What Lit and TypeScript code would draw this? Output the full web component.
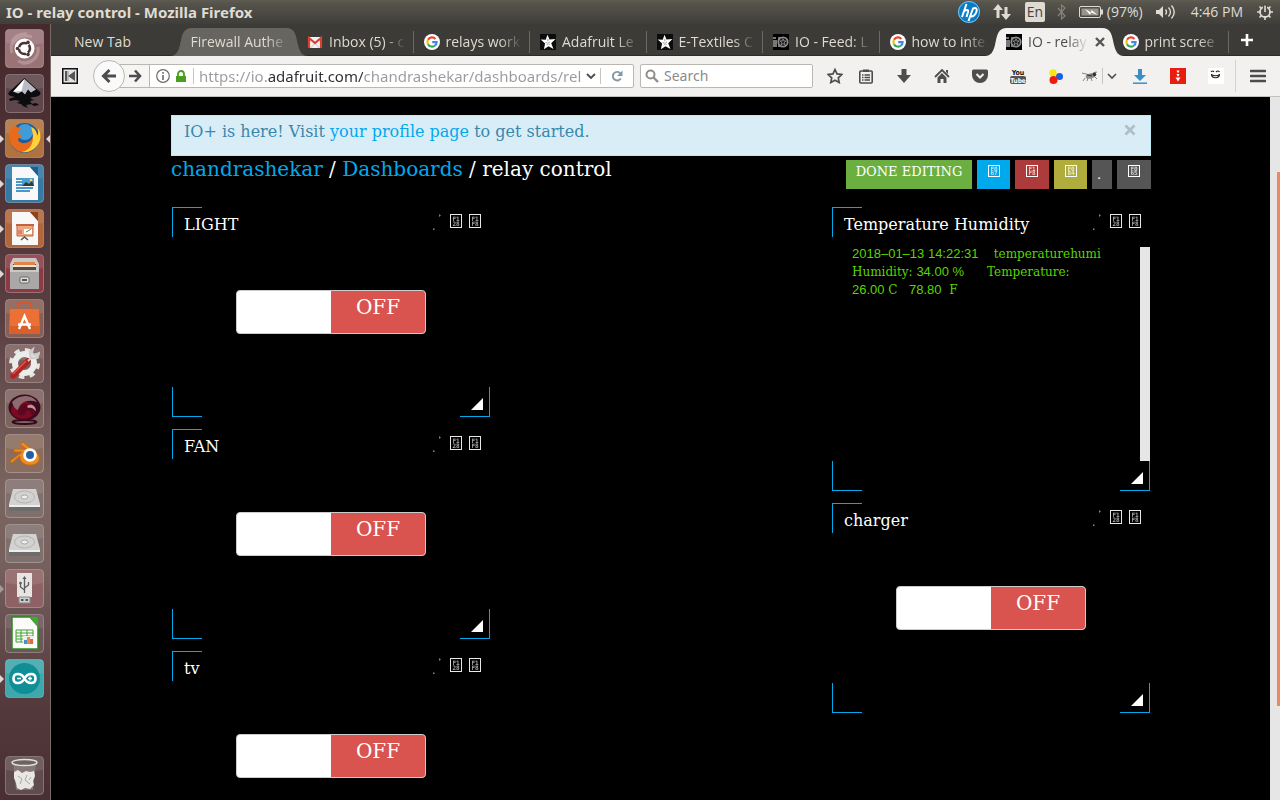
import { LitElement, html, css, svg, nothing, TemplateResult } from "lit";
import { customElement, property } from "lit/decorators.js";
import { classMap } from "lit/directives/class-map.js";

/* ---------- shared glyphs ---------- */

const google = svg`
  <circle cx="8" cy="8" r="8" fill="#fff"/>
  <g fill="none" stroke-width="2.2">
    <path d="M11.4 4.9A4.6 4.6 0 0 0 4 5.8" stroke="#ea4335"/>
    <path d="M4 5.8a4.6 4.6 0 0 0 0 4.4" stroke="#fbbc05"/>
    <path d="M4 10.2a4.6 4.6 0 0 0 7 1.3" stroke="#34a853"/>
    <path d="M11 11.5a4.6 4.6 0 0 0 1.6-3.3H8.2" stroke="#4285f4"/>
  </g>`;
const gmail = svg`
  <path d="M1 3h14v11H1z" fill="#f2f2f2"/>
  <path d="M2 14V4L8 9l6-5v10" fill="none" stroke="#d93f32" stroke-width="2.2"/>
  <path d="M4 14l3-4M12 14L9 10" stroke="#ccc" fill="none"/>`;
const star = svg`
  <path d="M0 0h16v16H0z" fill="#0c0c0c"/>
  <path d="M7.5.8l2 4.6 6-.4-4.3 4.3 2.3 5.6-5-2.6-4.6 3 1.2-5.8L.7 5.6l5 .1z" fill="#fff"/>
  <path d="M7.8 5v2.3M5.6 8.500l1.800.3M10 8l-1.700.8M7 11.200l.6-1.500M9.500 11l-1-1.500" stroke="#777" stroke-width=".7"/>`;
const io = svg`
  <path d="M0 0h16v16H0z" fill="#000"/>
  <path d="M0 3h3v2H0zM0 6h4v7H0z" fill="#777"/>
  <path d="M5 3h4v10H5z" fill="#777"/>
  <circle cx="10" cy="8" r="4.700" fill="#111" stroke="#8c8c8c" stroke-width="1.800"/>
  <path d="M10 4.800l.9 2.100 2.200.1-1.700 1.500.6 2.300-2-1.200-2 1.200.6-2.300L7 7l2.200-.1z" fill="#222" stroke="#aaa" stroke-width=".7"/>`;

const favicons: Record<string, TemplateResult> = { google, gmail, star, io } as any;

const icon = (body: unknown, w = 16, h = 16, box = `0 0 ${w} ${h}`) =>
  html`<svg width=${w} height=${h} viewBox=${box} aria-hidden="true">${body}</svg>`;

/* Placeholder box that shows the code point of a missing symbol */
const hexbox = (code: string, ink: string, h = 14) => html`
  <svg width="12" height=${h} viewBox="0 0 12 ${h}" role="img" aria-label=${code}>
    <rect x=".5" y=".5" width="11" height=${h - 1} fill="none" stroke=${ink}/>
    <g fill=${ink} opacity=".7" font-size="6" font-weight="700" font-family="DejaVu Sans Mono, monospace" text-anchor="middle">
      <text x="6" y=${h / 2 - 0.5}>${code.slice(0, 2)}</text><text x="6" y=${h - 2}>${code.slice(2)}</text>
    </g>
  </svg>`;

/* ---------- launcher ---------- */

const disk = svg`
  <path d="M8 10h23l4 15v6H4v-6z" fill="#d2d2d0"/><path d="M4 26h31v6H4z" fill="#6d6c6a"/>
  <path d="M4 26h31v2H4z" fill="#eee"/>
  <ellipse cx="19.5" cy="18" rx="10" ry="6" fill="none" stroke="#b2b2b0"/>
  <ellipse cx="19.5" cy="18" rx="3.5" ry="2" fill="#efefed" stroke="#a8a8a6"/>`;

interface Tile { name: string; bg: string; mark?: string; body: unknown }

const tiles: Tile[] = [
  { name: "Search your computer", bg: "#9a7377", body: svg`
    <path d="M7 24C3 12 16 4 27 8M13 32c10 5 22-2 20-14M7 13c2-6 9-9 15-8M32 26c-3 6-9 9-15 8" fill="none" stroke="#c9b0b2" stroke-width="3" opacity=".5"/>
    <circle cx="19.500" cy="19.500" r="10" fill="#fff"/>
    <circle cx="19.500" cy="19.500" r="5.500" fill="none" stroke="#4b3437" stroke-width="2.600" stroke-dasharray="9.5 2" stroke-dashoffset="4.700"/>
    <g fill="#4b3437"><circle cx="12.500" cy="19.500" r="1.800"/><circle cx="23" cy="13.400" r="1.800"/><circle cx="23" cy="25.600" r="1.800"/></g>` },
  { name: "Inkscape", bg: "#5e464a", body: svg`
    <path d="M19.500 4L35 18c2 3-3 5-7 5l-3 1 4 2-4 1 2 3-6 1 2 3-5-2-2-2-4-1 3-2-5-1-5 1-1-2 6-2C5 22 2 21 4 18z" fill="#0c0c0e"/>
    <path d="M19.500 5L31 15.500l-5 3-3-3-3 5-3-3-4 2-5-2z" fill="#b9bcc4"/><path d="M19.500 5l-3 12-8 .5z" fill="#fff"/>
    <path d="M26 30l5-1 3 2-5 1z" fill="#0c0c0e"/>` },
  { name: "Firefox", bg: "#b0733f", mark: "both", body: svg`
    <circle cx="19.500" cy="19" r="15" fill="#1d5c9e"/><circle cx="20" cy="13" r="8" fill="#3f9cd8"/>
    <path d="M5 11c2-2 3-4 6-6 0 3 1 4 5 4-1 2-3 3-4 5 3 1 5 2 5 4-2 1-4 1-4 3 2 4 8 4 12 1 4-3 4-9 1-14 5 2 6 6 6 9 2-3 1-6 1-8 4 6 3 14-2 19-5 6-15 7-21 2C4 25 3 18 5 11z" fill="#ea6a1b"/>
    <path d="M26 8c5 2 6 6 6 9 2-3 1-6 1-8 4 6 3 14-2 19-4 4-9 6-14 5 9-2 14-11 9-25z" fill="#ffd23c"/>` },
  { name: "LibreOffice Writer", bg: "#3579a6", mark: "left", body: svg`
    <path d="M7 3h18l8 9v24H7z" fill="#f8f8f8"/><path d="M25 3h8v9z" fill="#1f5f8f"/>
    <path d="M11 15h6M11 18h6M11 21h6M11 24h17M11 27h14" stroke="#4c96c8" stroke-width="2"/>
    <path d="M17 14h12v8H17z" fill="#4aa0d4"/><path d="M17 22l4-4 3 2 3-3 2 5z" fill="#333c30"/><circle cx="26" cy="16" r="1.300" fill="#fbd64a"/>` },
  { name: "LibreOffice Impress", bg: "#b1673b", mark: "left", body: svg`
    <path d="M7 3h18l8 9v24H7z" fill="#f8f8f8"/><path d="M25 3h8v9z" fill="#8a4520"/>
    <path d="M12 16h16v11H12z" fill="#eda987" stroke="#c3653a"/><path d="M11 16h18" stroke="#c3653a" stroke-width="2"/>
    <path d="M19 20h8v5h-8z" fill="#fff"/><path d="M21 23l2-1 3-2" stroke="#4a9a3a" fill="none"/><path d="M13 22h4M13 24h4" stroke="#c3653a"/>
    <path d="M16 31l3.500-3 3.500 3" stroke="#555" fill="none" stroke-width="1.500"/>` },
  { name: "Files", bg: "#8c3b46", mark: "left", body: svg`
    <path d="M8 4h23l3 6v25H5V10z" fill="#c9c8c6"/><path d="M8 10h23v6H8z" fill="#5a4a40"/>
    <path d="M9 8h21v3H9z" fill="#e0834a"/><path d="M8 11h23v2H8z" fill="#f2e6d0"/>
    <path d="M5 18h29v17H5z" fill="#a9a8a6"/><rect x="15" y="23" width="9" height="6" rx="1" fill="#ddd" stroke="#6a6a68"/><path d="M17 26h5" stroke="#555" stroke-width="2"/>` },
  { name: "Ubuntu Software", bg: "#866055", body: svg`
    <path d="M13 12V6c0-3 13-3 13 0v6" fill="none" stroke="#d15a2c" stroke-width="2.500"/>
    <path d="M5 10h29l1 25H4z" fill="#ec6f36"/><path d="M4 27h31v8H4z" fill="#d9602a"/>
    <path d="M14 30l5.500-13L25 30M13 25.500h13" fill="none" stroke="#fff" stroke-width="2.400"/>` },
  { name: "System Settings", bg: "#7c5f5d", body: svg`
    <circle cx="19.500" cy="19.500" r="13.500" fill="none" stroke="#e4e4e2" stroke-width="4" stroke-dasharray="5.300 5.300"/>
    <circle cx="19.500" cy="19.500" r="9.500" fill="none" stroke="#ececea" stroke-width="6"/>
    <path d="M8 32L23 17" stroke="#b52222" stroke-width="5.500" stroke-linecap="round"/><path d="M8 30L21 17" stroke="#e05848" stroke-width="1.500"/>
    <path d="M23 17l4-4M28 5c-4 3-4 7-1 9 4 1 7-2 7-5l-4 2-3-2z" fill="#ddd" stroke="#ccc" stroke-width="2"/>` },
  { name: "Chat", bg: "#7d635f", body: svg`
    <ellipse cx="19.500" cy="33" rx="12" ry="2" fill="none" stroke="#37071c" stroke-width="2"/>
    <ellipse cx="19.500" cy="18.500" rx="16" ry="13" fill="#3e0a20"/><ellipse cx="18" cy="21" rx="12" ry="9" fill="#7c0822"/>
    <path d="M7 13c7-8 20-8 25 0-8-3-17-1-19 8-3-1-5-4-6-8z" fill="#8d6c70"/>
    <path d="M13 25c0-8 6-12 12-9 5 3 5 8 2 11-1-5-3-6-6-5 0 3-4 6-8 3z" fill="#5a0820"/>
    <path d="M22 17c4-3 9 0 9 5-3-3-5-4-8-3z" fill="#b59a9a"/>` },
  { name: "Blender", bg: "#8a6d5e", body: svg`
    <path d="M5 27l12-9H9v-3h12l-6-5 3-2 11 9c8 4 7 13-2 14-8 1-13-4-12-9L7 29z" fill="#ee8a22" stroke="#c66a0c"/>
    <circle cx="25" cy="21" r="6.800" fill="#fff"/><circle cx="25" cy="21" r="4" fill="#265f9f"/>` },
  { name: "Volume 1", bg: "#80706d", body: disk },
  { name: "Volume 2", bg: "#80706d", body: disk },
  { name: "USB drive", bg: "#8e6265", mark: "hollow", body: svg`
    <path d="M12 4h15v24H12z" fill="#e6e5e3"/><path d="M14 28h11v6H14z" fill="#cfcecc" stroke="#8a8886"/>
    <path d="M16 31h2.500M20.500 31h2.500" stroke="#555" stroke-width="2"/>
    <path d="M19.500 24V9M19.500 21l-4-3v-4M19.500 19l4-3v-3" fill="none" stroke="#5c5c5a" stroke-width="1.300"/>
    <path d="M17.500 10l2-3 2 3z" fill="#5c5c5a"/><circle cx="15.500" cy="14" r="1.300" fill="#5c5c5a"/>` },
  { name: "LibreOffice Calc", bg: "#6b5658", body: svg`
    <path d="M7 3h18l8 9v23H7z" fill="#fbfbfb" stroke="#2c8a1e" stroke-width="1.500"/><path d="M24 3h9v10z" fill="#43a832"/>
    <path d="M11 16h17v12H11z" fill="#fff" stroke="#3fa02f"/><path d="M11 19h17M11 22h17M11 25h17M16 16v12M22 16v12" stroke="#3fa02f"/>
    <path d="M18 22h11v8H18z" fill="#eee"/><path d="M19 30v-4h3v4z" fill="#4a90c8"/><path d="M22 30v-7h3v7z" fill="#e88c3a"/><path d="M25 30v-5h3v5z" fill="#d96a4a"/>` },
  { name: "Arduino IDE", bg: "#3fa8ad", mark: "left", body: svg`
    <circle cx="19.500" cy="19.500" r="15.500" fill="#0f8f95"/>
    <path d="M19.500 19.500c-3-6-11-6-11 0s8 6 11 0 11-6 11 0-8 6-11 0z" fill="none" stroke="#fff" stroke-width="2.600"/>
    <path d="M12 19.500h4M23 19.500h4M25 17.500v4" stroke="#fff" stroke-width="1.400"/>` },
];

const trash: Tile = { name: "Trash", bg: "#604c4e", body: svg`
  <path d="M8 6h23l-3 28H11z" fill="#8d8583" opacity=".7"/>
  <ellipse cx="19.500" cy="6.500" rx="12.500" ry="3" fill="#6c6462" stroke="#e2e0de" stroke-width="1.500"/>
  <path d="M9 16l4-2 4 3 4-2 4 1 4-1 1 5-2 5 1 4-4 4-5-1-4 2-4-2-1-5-2-5z" fill="#e8e7e3"/>
  <path d="M13 20l4 3-2 5M22 19l-2 5 5 4M26 21l-2 3" stroke="#aaa8a4" fill="none"/>` };

@customElement("app-launcher")
class AppLauncher extends LitElement {
  static styles = css`
    :host { display: flex; flex-direction: column; justify-content: space-between; box-sizing: border-box;
      padding: 5px 6px 5px 5px; border-right: 1px solid #796967;
      background: linear-gradient(#46292d, #4e3337 20%, #5a3f42 38%, #7a6560 60%, #75605d 70%, #53393c 88%, #492f33); }
    nav { display: flex; flex-direction: column; gap: 6px; }
    .tile { position: relative; display: block; width: 39px; height: 39px; padding: 0; border: 0; border-radius: 4px; background: transparent; }
    .tile > svg { display: block; }
    .mark { position: absolute; top: 16px; left: -5px; border: solid transparent; border-width: 4px 0 4px 4px; border-left-color: #ddd8d6; }
    .hollow { border-left-color: #a79b9a; }
    .right { left: auto; right: -6px; border-width: 4px 4px 4px 0; border-right-color: #ddd8d6; }
  `;
  private tile(t: Tile) {
    return html`<button class="tile" aria-label=${t.name}>
      <svg width="39" height="39" viewBox="0 0 39 39" aria-hidden="true">
        <rect x=".5" y=".5" width="38" height="38" rx="3.500" fill=${t.bg} stroke="#fff" stroke-opacity=".28"/>
        <path d="M1 4a3 3 0 0 1 3-3h31a3 3 0 0 1 3 3v10Q19 18 1 14z" fill="#fff" opacity=".1"/>
        ${t.body}
      </svg>
      ${t.mark ? html`<span class="mark ${t.mark === "hollow" ? "hollow" : ""}"></span>` : nothing}
      ${t.mark === "both" ? html`<span class="mark right"></span>` : nothing}
    </button>`;
  }
  render() {
    return html`<nav aria-label="Applications">${tiles.map((t) => this.tile(t))}</nav>${this.tile(trash)}`;
  }
}

/* ---------- desktop panel ---------- */

@customElement("top-panel")
class TopPanel extends LitElement {
  static styles = css`
    :host { display: flex; align-items: center; justify-content: space-between; height: 24px; padding: 0 7px 0 6px;
      background: linear-gradient(#5f5d52, #55534b 15%, #3f3e3a); color: #dfdbd2;
      font: 14px/24px "Open Sans", "Noto Sans", sans-serif; white-space: nowrap; }
    .title { font: 700 15px/24px "Noto Sans", "Open Sans", sans-serif; }
    .tray { display: flex; align-items: center; }
    .tray svg { display: block; }
    .hp { margin-right: 13px; }
    .net { margin-right: 14px; }
    .lang { height: 20px; width: 20px; line-height: 20px; border-radius: 2px; background: #dfdbd2; color: #45443e; text-align: center; margin-right: 12px; }
    .bt { margin-right: 13px; }
    .bat { margin-right: 4px; }
    .pct { margin-right: 13px; }
    .vol { margin-right: 15px; }
    .clock { margin-right: 14px; }
  `;
  render() {
    return html`
      <span class="title">IO - relay control - Mozilla Firefox</span>
      <div class="tray">
        <span class="hp">${icon(svg`<circle cx="11" cy="11" r="11" fill="#0b7cc4"/><circle cx="11" cy="11" r="10.500" fill="none" stroke="#7cc4ee"/>
          <g fill="none" stroke="#fff" stroke-width="2"><path d="M8.500 3L4 16M6 10.500c2-2 5-2 4 .5L8.500 16M10.500 20L15 7.500c3-1 4.500 0 3.500 3s-2.500 5.500-6 5"/></g>`, 22, 22)}</span>
        <span class="net">${icon(svg`<path d="M5 1l5 6H6.500v8h-3V7H0z" fill="#dfdbd2"/><path d="M13 17l-5-6h3.500V4h3v7H18z" fill="#dfdbd2"/>`, 18, 18)}</span>
        <span class="lang">En</span>
        <span class="bt">${icon(svg`<path d="M1 4l7 8-3.500 3V1L8 4l-7 8" fill="none" stroke="#85837b" stroke-width="1.200"/>`, 9, 16)}</span>
        <span class="bat">${icon(svg`<rect x=".5" y=".5" width="21" height="11" rx="1.500" fill="none" stroke="#dfdbd2"/><path d="M2.500 2.500h17v7h-17z" fill="#97948b"/><path d="M22 3.500h2v5h-2z" fill="#dfdbd2"/><path d="M6 3l6 3.500.5-2.500 6 5-6.500-2.500L11 9z" fill="#fff"/>`, 24, 12)}</span>
        <span class="pct">(97%)</span>
        <span class="vol">${icon(svg`<path d="M0 5h3l4-4v12L3 9H0z" fill="#dfdbd2"/><path d="M9.500 4.500q2 2.500 0 5M12.500 2.500q4 4.500 0 9M15.500.5q5.500 6.500 0 13" fill="none" stroke="#dfdbd2" stroke-width="1.400"/>`, 20, 14)}</span>
        <span class="clock">4:46 PM</span>
        ${icon(svg`<circle cx="8" cy="8" r="5" fill="none" stroke="#dfdbd2" stroke-width="1.800"/><path d="M8 0v16M0 8h16M2.500 2.500l11 11M13.500 2.500l-11 11" stroke="#dfdbd2" stroke-width="1.600"/><circle cx="8" cy="8" r="4" fill="#4b4a44"/><path d="M6 0h4v8H6z" fill="#4b4a44"/><path d="M8 1.500V8" stroke="#dfdbd2" stroke-width="1.600"/>`)}
      </div>`;
  }
}

/* ---------- browser chrome ---------- */

interface Tab { label: string; fav?: string; state?: "hover" | "active"; sep?: boolean }

const tabs: Tab[] = [
  { label: "New Tab" },
  { label: "Firewall Authe", state: "hover" },
  { label: "Inbox (5) - c", fav: "gmail", sep: true },
  { label: "relays work", fav: "google", sep: true },
  { label: "Adafruit Le", fav: "star", sep: true },
  { label: "E-Textiles C", fav: "star", sep: true },
  { label: "IO - Feed: L", fav: "io", sep: true },
  { label: "how to inte", fav: "google" },
  { label: "IO - relay", fav: "io", state: "active" },
  { label: "print scree", fav: "google", sep: true },
];

@customElement("browser-tabs")
class BrowserTabs extends LitElement {
  static styles = css`
    :host { display: flex; height: 31px; padding: 0 0 0 13px; background: #3c3b37; border-bottom: 1px solid #2c2b28;
      font: 14px/28px "Open Sans", "Noto Sans", sans-serif; color: #dfdbd2; }
    [role="tablist"] { flex: 1; display: flex; min-width: 0; }
    .tab { position: relative; flex: 1 1 0; min-width: 0; display: flex; align-items: center; gap: 6px; padding: 4px 8px 0 10px; box-sizing: border-box;
      border: 0; background: none; color: inherit; font: inherit; text-align: left; }
    .tab > svg { flex: none; }
    .label { flex: 1; min-width: 0; overflow: hidden; white-space: nowrap; }
    .fade { -webkit-mask-image: linear-gradient(90deg, #000 calc(100% - 22px), transparent); mask-image: linear-gradient(90deg, #000 calc(100% - 22px), transparent); }
    .sep::after { content: ""; position: absolute; right: 0; top: 7px; bottom: 2px; width: 1px; background: #6b6963; }
    .shape { position: absolute; z-index: 0; top: 4px; bottom: -1px; left: -11px; right: -11px; display: flex; }
    .mid { flex: 1; margin: 0 -1px; }
    .hover .mid { background: #67655f; }
    .hover svg.edge { fill: #67655f; }
    .active { color: #4c4c4c; }
    .active .mid { background: #f2f1f0; }
    .active svg.edge { fill: #f2f1f0; }
    .front { position: relative; z-index: 1; }
    .close { position: relative; }
    .add { flex: none; width: 51px; border: 0; padding: 4px 16px 0 0; background: none; }
  `;
  private edge(d: string) {
    return html`<svg class="edge" width="24" height="28" viewBox="0 0 24 28"><path d=${d}/></svg>`;
  }
  render() {
    return html`<div role="tablist">${tabs.map((t) => html`
      <button role="tab" aria-selected=${t.state === "active"} class=${classMap({ tab: true, sep: !!t.sep, hover: t.state === "hover", active: t.state === "active" })}>
        ${t.state ? html`<span class="shape">${this.edge("M0 28C6 28 8 24 10 17C12 7 13 0 22 0H24V28z")}<span class="mid"></span>${this.edge("M24 28C18 28 16 24 14 17C12 7 11 0 2 0H0V28z")}</span>` : nothing}
        ${t.fav ? html`<svg class="front" width="16" height="16" viewBox="0 0 16 16" aria-hidden="true">${favicons[t.fav]}</svg>` : nothing}
        <span class=${classMap({ label: true, front: true, fade: t.label !== "New Tab" })}>${t.label}</span>
        ${t.state === "active" ? html`<svg class="close" width="10" height="10" viewBox="-1 -1 10 10"><path d="M0 0l8 8M8 0L0 8" stroke="#555" stroke-width="2.400"/></svg>` : nothing}
      </button>`)}</div>
      <button class="add" aria-label="Open a new tab">${icon(svg`<path d="M7 1v12M1 7h12" stroke="#fff" stroke-width="2.600"/>`, 14, 14)}</button>`;
  }
}

const G = "#4d4d4d";
const tools: [string, unknown][] = [
  ["Library", svg`<rect x="1.800" y="3" width="12.400" height="12" rx="1" fill="none" stroke=${G} stroke-width="1.600"/><path d="M5 1.500h6V4H5z" fill=${G}/><path d="M4 7h1.500M4 9.500h1.500M4 12h1.500M6.500 7H12M6.500 9.500H12M6.500 12H12" stroke=${G} stroke-width="1.400"/>`],
  ["Downloads", svg`<path d="M5.500 1h5v6H15l-7 8-7-8h4.500z" fill=${G}/>`],
  ["Home", svg`<path d="M1 9l7-7 7 7" fill="none" stroke=${G} stroke-width="1.800"/><path d="M12 2h2v4l-2-2zM3.500 9.500L8 5l4.500 4.500V15h-3v-4h-3v4h-3z" fill=${G}/>`],
  ["Pocket", svg`<path d="M1.500 1.500h13q1.500 0 1.500 1.500v4a8 8 0 0 1-16 0V3q0-1.500 1.500-1.500z" fill=${G}/><path d="M4.500 6L8 9.500 11.500 6" fill="none" stroke="#f2f1f0" stroke-width="2"/>`],
  ["YouTube", svg`<rect y="8" width="16" height="8" rx="2" fill="#555"/><g font-family="DejaVu Sans Condensed, sans-serif" font-weight="700" text-anchor="middle"><text x="8" y="6.500" font-size="7" fill="#111">You</text><text x="8" y="14.500" font-size="6.500" fill="#fff">Tube</text></g>`],
  ["Colors", svg`<circle cx="5" cy="5" r="3.800" fill="#f6ea14"/><circle cx="11.500" cy="8.500" r="3.500" fill="#1560e0"/><circle cx="5.500" cy="12" r="4" fill="#ee1c0c"/>`],
];

@customElement("browser-toolbar")
class BrowserToolbar extends LitElement {
  static styles = css`
    :host { display: flex; align-items: center; height: 40px; background: #f2f1f0; border-bottom: 1px solid #c4c1bd;
      font: 14px/22px "Noto Sans", "Open Sans", sans-serif; color: #4c4c4c; }
    svg { display: block; }
    button { border: 0; background: none; padding: 0; display: flex; align-items: center; justify-content: center; height: 32px; flex: none; }
    .side { width: 37px; }
    .back { position: relative; z-index: 1; width: 32px; height: 32px; box-sizing: border-box; margin: 0 -6px 0 5px; border: 1px solid #bab7b3; border-radius: 50%; background: #fafafa; }
    .url { flex: 1 1 514px; min-width: 0; box-sizing: border-box; display: flex; align-items: center; height: 24px; border: 1px solid #bab7b3; border-radius: 0 2px 2px 0; background: #fff; }
    .fwd { width: 30px; height: 22px; border-right: 1px solid #bab7b3; background: #f6f5f4; }
    .info { width: 24px; height: 22px; margin: 0 0 0 1px; }
    .lock { flex: none; margin: 0 7px 0 1px; }
    .bar { flex: none; width: 1px; height: 16px; background: #c8c6c3; }
    input { min-width: 0; border: 0; outline: 0; padding: 0; background: none; font: inherit; color: #8b8b8b; }
    .address { flex: 1; margin-left: 5px; height: 22px; font-size: 15px; color: transparent;
      background: linear-gradient(90deg, #9a9a9a 68px, #2e2e2e 68px 164px, #9a9a9a 164px); -webkit-background-clip: text; background-clip: text; }
    .drop { width: 18px; height: 22px; }
    .reload { width: 32px; height: 22px; }
    .search { flex: 0 1 173px; min-width: 0; box-sizing: border-box; display: flex; align-items: center; gap: 5px; height: 24px; margin: 0 10px 0 6px; padding: 0 4px; border: 1px solid #bab7b3; border-radius: 2px; background: #fff; }
    .search svg { flex: none; }
    .search input { flex: 1; }
    .search input::placeholder { color: #8b8b8b; opacity: 1; }
    .star { width: 24px; }
    .tool { width: 38px; }
    .fly { width: 27px; padding-left: 2px; box-sizing: border-box; }
    .menuarrow { width: 18px; }
    .menu { width: 45px; border-left: 1px solid #d5d3d0; }
  `;
  render() {
    return html`
      <button class="side" aria-label="Sidebar">${icon(svg`<rect x=".75" y=".75" width="14.500" height="14.500" fill="#e4e4e4" stroke="#111" stroke-width="1.500"/><path d="M3 3h2v10H3zM13 3v10L6 8z" fill="#555"/><path d="M6 3v10" stroke="#888"/>`)}</button>
      <button class="back" aria-label="Back">${icon(svg`<path d="M8.500 2L2.500 8l6 6M3 8h12" fill="none" stroke=${G} stroke-width="3"/>`)}</button>
      <div class="url">
        <button class="fwd" aria-label="Forward">${icon(svg`<path d="M7 1.500L12 7l-5 5.500M12 7H1" fill="none" stroke=${G} stroke-width="2.600"/>`, 14, 14)}</button>
        <button class="info" aria-label="Site information">${icon(svg`<circle cx="7" cy="7" r="6.300" fill="none" stroke="#6a6a6a" stroke-width="1.200"/><path d="M7 6v5M7 3v1.800" stroke="#6a6a6a" stroke-width="1.600"/>`, 14, 14)}</button>
        <svg class="lock" width="10" height="13" viewBox="0 0 10 13"><path d="M2 6V4a3 3 0 0 1 6 0v2" fill="none" stroke="#4a9e1f" stroke-width="1.800"/><path d="M0 6h10v6H0z" fill="#4a9e1f"/></svg>
        <span class="bar"></span>
        <input class="address" type="text" aria-label="Address" value="https://io.adafruit.com/chandrashekar/dashboards/rel" />
        <button class="drop" aria-label="History">${icon(svg`<path d="M1 1l4 4 4-4" fill="none" stroke=${G} stroke-width="1.900"/>`, 10, 7)}</button>
        <span class="bar"></span>
        <button class="reload" aria-label="Reload">${icon(svg`<path d="M9.800 8.500A4.300 4.300 0 1 1 9.500 3.500" fill="none" stroke="#8397a5" stroke-width="1.900"/><path d="M11.500.5v5.500H6z" fill="#8397a5"/>`, 12, 12)}</button>
      </div>
      <label class="search">${icon(svg`<circle cx="5.500" cy="5.500" r="4" fill="none" stroke="#8f8f8f" stroke-width="2"/><path d="M8.500 8.500L13 13" stroke="#8f8f8f" stroke-width="2.400"/>`, 14, 14)}
        <input type="search" aria-label="Search" placeholder="Search" /></label>
      <button class="star" aria-label="Bookmark">${icon(svg`<path d="M8 1.500l2 4.400 4.800.6-3.500 3.300.9 4.700L8 12.200l-4.200 2.300.9-4.700L1.200 6.500 6 5.900z" fill="none" stroke=${G} stroke-width="1.700"/>`)}</button>
      ${tools.map(([n, b]) => html`<button class="tool" aria-label=${n}>${icon(b)}</button>`)}
      <button class="fly" aria-label="Firebug">${icon(svg`<ellipse cx="8.500" cy="8" rx="5" ry="2.500" transform="rotate(-15 8.500 8)" fill="#8c8c8a"/><path d="M0 5l8 2 6-3M3 10l-2 3M6 10l-1 3M9 10l1 3M12 8l3 3M11 5l4-1" stroke="#777" stroke-width=".9" fill="none"/><circle cx="12.500" cy="6.500" r="1.800" fill="#333"/><path d="M5 7l5 1" stroke="#333"/>`)}</button>
      <span class="bar"></span>
      <button class="menuarrow" aria-label="Firebug menu">${icon(svg`<path d="M1 1l4 4 4-4" fill="none" stroke=${G} stroke-width="1.600"/>`, 10, 7)}</button>
      <button class="tool" aria-label="Save video">${icon(svg`<path d="M6 1h4v6h4l-6 6-6-6h4z" fill="#3a8ec8"/><path d="M1 15.200h14" stroke="#3a8ec8" stroke-width="1.500"/>`)}</button>
      <button class="tool" aria-label="Video helper">${icon(svg`<path d="M0 0h16v16H0z" fill="#e71d0e"/><path d="M6.500 2.500h3l-1.500 3zM6.500 6h3L8 9zM5.500 9.500h5L8 13.500z" fill="#fff"/>`)}</button>
      <button class="tool" aria-label="Face">${icon(svg`<path d="M0 0h16v16H0z" fill="#fff"/><path d="M3 4q1.500-2 3 0M8 4q2-2 3.500 0M3.500 6c0 5 8 5 8 0M4 7q4 1.500 7 0" fill="none" stroke="#222" stroke-width="1.200"/>`)}</button>
      <button class="menu" aria-label="Menu">${icon(svg`<path d="M1 2h14M1 7h14M1 12h14" stroke=${G} stroke-width="2.600" stroke-linecap="round"/>`, 16, 14)}</button>`;
  }
}

/* ---------- dashboard ---------- */

@customElement("dash-block")
class DashBlock extends LitElement {
  @property() heading = "";
  static styles = css`
    :host { position: relative; display: flex; flex-direction: column; box-sizing: border-box; min-height: 210px; }
    header { display: flex; align-items: flex-start; justify-content: space-between; padding: 7px 9px 0 12px; height: 33px; box-sizing: content-box; }
    h2 { margin: 0; font: 16px/22px "DejaVu Serif", serif; color: #fff; }
    .acts { display: flex; align-items: flex-start; gap: 7px; }
    .acts button { display: block; padding: 0; border: 0; background: none; }
    .acts svg { display: block; }
    .c { position: absolute; width: 29px; height: 29px; border: 0 solid #00a9ec; pointer-events: none; }
    .tl { left: 0; top: 0; border-width: 1px 0 0 1px; }
    .bl { left: 0; bottom: 0; border-width: 0 0 1px 1px; }
    .br { right: 0; bottom: 0; border-width: 0 1px 1px 0; }
    .grip { position: absolute; right: 7px; bottom: 7px; }
    .grip svg { display: block; }
  `;
  render() {
    return html`
      <header><h2>${this.heading}</h2>
        <div class="acts">
          ${icon(svg`<path d="M6 -3l2 1.500L6 0z" fill="#b8702a"/><path d="M0 11.500h1.500V13H0z" fill="#888"/>`, 10, 16, "0 -3 10 16")}
          <button aria-label="Edit block">${hexbox("F128", "#e8e8e8")}</button>
          <button aria-label="Delete block">${hexbox("F1F8", "#e8e8e8")}</button>
        </div></header>
      <slot></slot>
      <span class="c tl"></span><span class="c bl"></span><span class="c br"></span>
      <span class="grip">${icon(svg`<path d="M12 0v12H0z" fill="#fff"/>`, 12, 12)}</span>`;
  }
}

@customElement("relay-switch")
class RelaySwitch extends LitElement {
  @property() name = "";
  static styles = css`
    :host { display: flex; justify-content: center; padding-top: 43px; }
    button { display: grid; grid-template-columns: 1fr 1fr; width: 190px; height: 44px; padding: 0; box-sizing: border-box; overflow: hidden;
      border: 1px solid #ccc; border-radius: 4px; background: #fff; font: 20px/32px "DejaVu Serif", serif; color: #fff; }
    .off { height: 42px; background: #d9534f; }
  `;
  render() {
    return html`<button role="switch" aria-checked="false" aria-label=${this.name}><span></span><span class="off">OFF</span></button>`;
  }
}

@customElement("io-page")
class IoPage extends LitElement {
  static styles = css`
    :host { display: flex; min-height: 0; min-width: 0; overflow: hidden; background: #000; color: #fff;
      font: 16px/20px "DejaVu Serif", serif; }
    main { flex: 1; min-width: 0; padding: 18px 0 0 1px; }
    .wrap { max-width: 980px; margin: 0 auto; }
    a { color: #00a9ec; text-decoration: none; }
    .alert { display: flex; justify-content: space-between; align-items: flex-start; height: 41px; box-sizing: border-box; padding: 5px 14px 0 12px;
      border: 1px solid #bce8f1; background: #d9edf7; color: #3a87ad; line-height: 22px; }
    .alert p { margin: 0; }
    .alert button { border: 0; background: none; padding: 3px 0 0; }
    .alert svg { display: block; }
    .head { display: flex; justify-content: space-between; align-items: flex-start; }
    h1 { margin: 0; font: 20px/26px "DejaVu Serif", serif; }
    .btns { display: flex; gap: 5px; padding-top: 4px; }
    .btns button { display: flex; justify-content: center; align-items: flex-start; box-sizing: border-box; height: 29px; border: 0; padding: 5px 0 0; width: 33px; color: #fff; font: 13px/14px "DejaVu Serif", serif; }
    .btns .done { width: 126px; background: #6aaf3f; }
    .add { background: #00a9ec; }
    .btns .del, .btns .gear { width: 34px; }
    .del { background: #ad3b3b; }
    .key { background: #b0ad3c; }
    .gear, .btns .dot { background: #555; }
    .btns .dot { width: 20px; padding: 8px 6px 0 0; }
    .grid { display: grid; grid-template-columns: repeat(3, 1fr); gap: 12px; padding: 18px 1px 0; }
    .col { display: flex; flex-direction: column; gap: 12px; }
    .log { height: 214px; margin-bottom: 30px; display: flex; justify-content: space-between; }
    .lines { margin: -2px 0 0 20px; font-size: 12px; line-height: 17px; color: #59d600; }
    .lines p { margin: 0; display: flex; align-items: baseline; white-space: pre; }
    .n { font-family: "Liberation Sans", sans-serif; font-size: 13px; }
    .track { width: 10px; background: #e6e6e6; }
    .scroll { flex: none; width: 10px; background: #e6e6e6; display: flex; flex-direction: column; align-items: flex-end; padding-top: 75px; box-sizing: border-box; }
    .thumb { width: 3px; height: 534px; background: #f08763; }
  `;
  render() {
    const relay = (t: string) => html`<dash-block heading=${t}><relay-switch name=${t}></relay-switch></dash-block>`;
    return html`
      <main><div class="wrap">
        <div class="alert"><p>IO+ is here! Visit <a href="#profile">your profile page</a> to get started.</p>
          <button aria-label="Close">${icon(svg`<path d="M1.500 1.500l9 9M10.500 1.500l-9 9" stroke="#afbfc7" stroke-width="2.800"/>`, 12, 12)}</button></div>
        <div class="head">
          <h1><a href="#user">chandrashekar</a> / <a href="#dashboards">Dashboards</a> / relay control</h1>
          <div class="btns">
            <button class="done">DONE EDITING</button>
            <button class="add" aria-label="Add block">${hexbox("F067", "#fff", 12)}</button>
            <button class="del" aria-label="Delete dashboard">${hexbox("F1F8", "#fff", 12)}</button>
            <button class="key" aria-label="View key">${hexbox("F084", "#fff", 12)}</button>
            <button class="dot" aria-label="Privacy">.</button>
            <button class="gear" aria-label="Full screen">${hexbox("F065", "#fff", 12)}</button>
          </div>
        </div>
        <div class="grid">
          <div class="col">${["LIGHT", "FAN", "tv"].map(relay)}</div>
          <div class="col"></div>
          <div class="col">
            <dash-block heading="Temperature Humidity">
              <div class="log">
                <div class="lines">
                  <p><span class="n">2018–01–13 14:22:31</span><span>    temperaturehumi</span></p>
                  <p><span>Humidity: </span><span class="n">34.00 %</span><span>      Temperature:</span></p>
                  <p><span class="n">26.00</span><span> C   </span><span class="n">78.80</span><span>  F</span></p>
                </div>
                <span class="track"></span>
              </div>
            </dash-block>
            ${relay("charger")}
          </div>
        </div>
      </div></main>
      <div class="scroll"><span class="thumb"></span></div>`;
  }
}

@customElement("app-root")
class AppRoot extends LitElement {
  static styles = css`
    :host { display: grid; grid-template: auto minmax(0, 1fr) / 51px minmax(0, 1fr); height: 100vh; overflow: hidden; }
    top-panel { grid-column: 1 / -1; }
    .window { display: grid; grid-template: auto auto minmax(0, 1fr) / minmax(0, 1fr); min-width: 0; min-height: 0; }
  `;
  render() {
    return html`<top-panel></top-panel><app-launcher></app-launcher>
      <div class="window"><browser-tabs></browser-tabs><browser-toolbar></browser-toolbar><io-page></io-page></div>`;
  }
}
